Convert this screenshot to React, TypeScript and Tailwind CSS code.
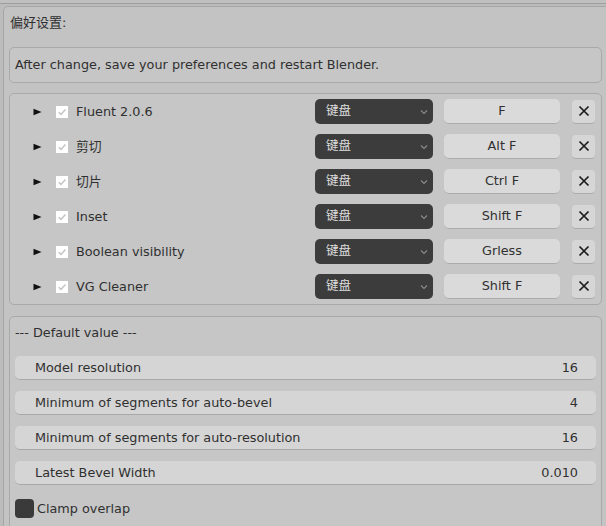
const addons = [
  { name: "Fluent 2.0.6", key: "F" },
  { name: "剪切", key: "Alt F" },
  { name: "切片", key: "Ctrl F" },
  { name: "Inset", key: "Shift F" },
  { name: "Boolean visibility", key: "Grless" },
  { name: "VG Cleaner", key: "Shift F" },
];

const fields = [
  { label: "Model resolution", value: "16" },
  { label: "Minimum of segments for auto-bevel", value: "4" },
  { label: "Minimum of segments for auto-resolution", value: "16" },
  { label: "Latest Bevel Width", value: "0.010" },
];

const font = "font-['DejaVu_Sans','Noto_Sans_CJK_SC',sans-serif]";

const Triangle = () => (
  <svg width="9" height="8" viewBox="0 0 9 8">
    <polygon points="0.5,0.8 8.5,4 0.5,7.2" fill="#111" />
  </svg>
);

const Check = () => (
  <div className="w-[12px] h-[12px] bg-white flex items-center justify-center">
    <svg width="10" height="10" viewBox="0 0 10 10">
      <path d="M1.8 5.2 L4 7.4 L8.4 2.6" stroke="#c4c4c4" strokeWidth="1.5" fill="none" />
    </svg>
  </div>
);

const Chevron = () => (
  <svg width="8" height="6" viewBox="0 0 8 6">
    <path d="M1 1.5 L4 4.5 L7 1.5" stroke="#8c8c8c" strokeWidth="1.1" fill="none" />
  </svg>
);

const Cross = () => (
  <svg width="12" height="12" viewBox="0 0 12 12">
    <path d="M1.5 1.5 L10.5 10.5 M10.5 1.5 L1.5 10.5" stroke="#1c1c1c" strokeWidth="1.7" />
  </svg>
);

export default function App() {
  return (
    <div className={`w-[606px] h-[526px] overflow-hidden bg-[#bcbcbc] text-[#303030] text-[12.8px] ${font}`}>
      <div className="h-[4px] border-b border-[#9e9e9e] bg-[#c0c0c0]" />
      <div className="mt-[2px] ml-[3px] w-[620px] h-[600px] border border-[#a6a6a6] rounded-tl-[5px] bg-[#c3c3c3] pl-[5px] pt-[7px]">
        <div className="w-[593px] flex flex-col">
          <div className="h-[18px] flex items-center pl-[1px] text-[13px]">偏好设置:</div>
          <div className="mt-[15px] h-[36px] border border-[#a9a9a9] rounded-[5px] bg-[#c6c6c6] flex items-center pl-[5px]">
            After change, save your preferences and restart Blender.
          </div>
          <div className="mt-[10px] border border-[#a9a9a9] rounded-[5px] bg-[#c6c6c6]">
            {addons.map((a) => (
              <div key={a.name + a.key} className="h-[35px] flex items-center">
                <div className="ml-[23px] w-[9px] flex items-center">
                  <Triangle />
                </div>
                <div className="ml-[14px]">
                  <Check />
                </div>
                <div className="ml-[8px] w-[239px]">{a.name}</div>
                <div className="w-[118px] h-[25px] rounded-[5px] bg-[#3c3c3c] flex items-center justify-between pl-[11px] pr-[5px] text-[#dedede] text-[12.5px]">
                  <span>键盘</span>
                  <Chevron />
                </div>
                <div className="ml-[11px] w-[116px] h-[25px] rounded-[5px] bg-[#dadada] border-b border-[#ababab] flex items-center justify-center">
                  {a.key}
                </div>
                <div className="ml-[12px] w-[23px] h-[24px] rounded-[4px] bg-[#d6d6d6] border-b border-[#ababab] flex items-center justify-center">
                  <Cross />
                </div>
              </div>
            ))}
          </div>
          <div className="mt-[11px] h-[220px] border border-[#a9a9a9] rounded-[5px] bg-[#c6c6c6] px-[5px]">
            <div className="h-[32px] flex items-center">--- Default value ---</div>
            <div className="flex flex-col gap-[11px] mt-[7px]">
              {fields.map((f) => (
                <div
                  key={f.label}
                  className="h-[24px] rounded-[5px] bg-[#d5d5d5] border-b border-[#a8a8a8] flex items-center justify-between pl-[20px] pr-[18px]"
                >
                  <span className="pt-[1px]">{f.label}</span>
                  <span className="pt-[1px]">{f.value}</span>
                </div>
              ))}
            </div>
            <div className="mt-[14px] flex items-center">
              <div className="w-[19px] h-[19px] rounded-[4px] bg-[#3a3a3a]" />
              <span className="ml-[3px]">Clamp overlap</span>
            </div>
          </div>
        </div>
      </div>
    </div>
  );
}
